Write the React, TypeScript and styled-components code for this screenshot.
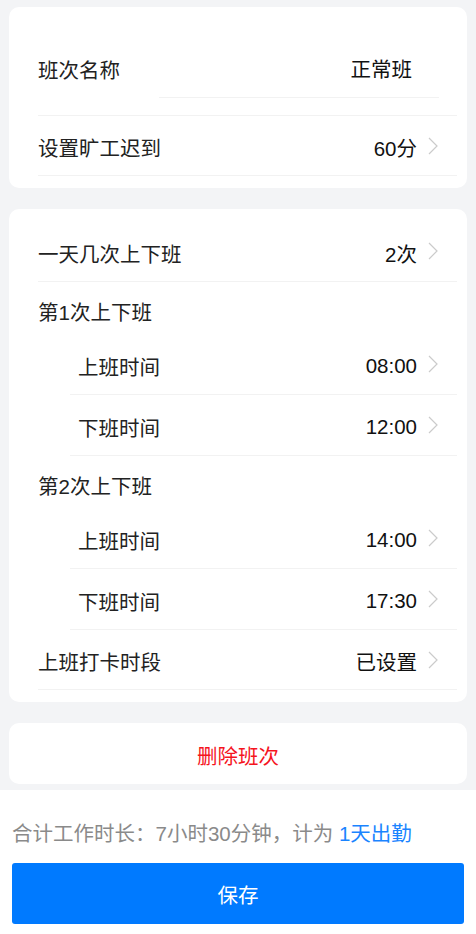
import React from "react"
import styled, { createGlobalStyle } from "styled-components"

const GlobalStyle = createGlobalStyle`
	html, body {
		margin: 0;
		padding: 0;
		background: #f3f4f6;
	}
	body {
		font-family: "Liberation Sans", Arial, "Noto Sans CJK SC", sans-serif;
		color: #222;
	}
	* {
		box-sizing: border-box;
	}
`

type Item = { label: string; value: string; sub?: boolean; last?: boolean }

const Chevron: React.FC = () => (
	<ChevronSvg viewBox="0 0 10 18" width={10} height={18}>
		<path d="M1 1 L9 9 L1 17" fill="none" stroke="#cbcbcb" strokeWidth="1.2" />
	</ChevronSvg>
)

const Row: React.FC<Item> = ({ label, value, sub, last }) => (
	<RowBox $sub={sub} $last={last}>
		<Label>{label}</Label>
		<Value>{value}</Value>
		<Chevron />
	</RowBox>
)

const App: React.FC = () => {
	const round = (n: number, start: string, end: string) => (
		<React.Fragment key={n}>
			<GroupTitle>第{n}次上下班</GroupTitle>
			<Row sub label="上班时间" value={start} />
			<Row sub label="下班时间" value={end} />
		</React.Fragment>
	)

	return (
		<Page>
			<GlobalStyle />
			<Content>
				<Card>
					<NameRow>
						<Label>班次名称</Label>
						<NameInput>正常班</NameInput>
					</NameRow>
					<Row last label="设置旷工迟到" value="60分" />
				</Card>

				<Card>
					<Row label="一天几次上下班" value="2次" />
					{round(1, "08:00", "12:00")}
					{round(2, "14:00", "17:30")}
					<Row last label="上班打卡时段" value="已设置" />
				</Card>

				<DeleteCard>删除班次</DeleteCard>
			</Content>

			<Footer>
				<Summary>
					合计工作时长：7小时30分钟，计为 <Highlight>1天出勤</Highlight>
				</Summary>
				<SaveButton>保存</SaveButton>
			</Footer>
		</Page>
	)
}

export default App

const Page = styled.div`
	width: 476px;
	min-height: 934px;
	display: flex;
	flex-direction: column;
	background: #f3f4f6;
`

const Content = styled.main`
	display: flex;
	flex-direction: column;
	gap: 21px;
	padding: 7px 9px 6px;
`

const Card = styled.section`
	background: #fff;
	border-radius: 10px;
	padding: 12px 10px 12px 29px;
	display: flex;
	flex-direction: column;
`

const RowBox = styled.div<{ $sub?: boolean; $last?: boolean }>`
	display: flex;
	align-items: center;
	height: ${(p) => (p.$last ? "60px" : "61px")};
	border-bottom: 1px solid #f2f2f2;
	margin-left: ${(p) => (p.$sub ? "32px" : "0")};
	padding-left: ${(p) => (p.$sub ? "8px" : "0")};
	padding-right: 19px;
`

const NameRow = styled.div`
	display: flex;
	align-items: center;
	height: 97px;
	border-bottom: 1px solid #f2f2f2;
	padding-right: 18px;
`

const Label = styled.span`
	flex: 1;
	font-size: 20.5px;
	color: #222;
	padding-top: 3px;
`

const Value = styled.span`
	font-size: 20.5px;
	color: #111;
	padding-top: 3px;
`

const NameInput = styled.div`
	width: 280px;
	height: 62px;
	display: flex;
	align-items: center;
	justify-content: flex-end;
	padding: 3px 27px 0 0;
	font-size: 20.5px;
	color: #111;
	border-bottom: 1px solid #f2f2f2;
`

const ChevronSvg = styled.svg`
	display: block;
	margin-left: 11px;
`

const GroupTitle = styled.div`
	height: 52px;
	display: flex;
	align-items: center;
	padding-top: 6px;
	font-size: 20.5px;
	color: #222;
`

const DeleteCard = styled.button`
	height: 61px;
	border: none;
	border-radius: 10px;
	background: #fff;
	color: #f5141e;
	font-family: inherit;
	font-size: 20.5px;
	padding-top: 3px;
`

const Footer = styled.footer`
	flex: 1;
	background: #fff;
	padding: 30px 12px 11px;
	display: flex;
	flex-direction: column;
	gap: 15px;
`

const Summary = styled.p`
	margin: 0;
	font-size: 20.5px;
	color: #8a8a8a;
	line-height: 28px;
`

const Highlight = styled.span`
	color: #1a84ff;
`

const SaveButton = styled.button`
	height: 61px;
	border: none;
	border-radius: 3px;
	background: #007aff;
	color: #fff;
	font-family: inherit;
	font-size: 20.5px;
	padding-top: 2px;
`
